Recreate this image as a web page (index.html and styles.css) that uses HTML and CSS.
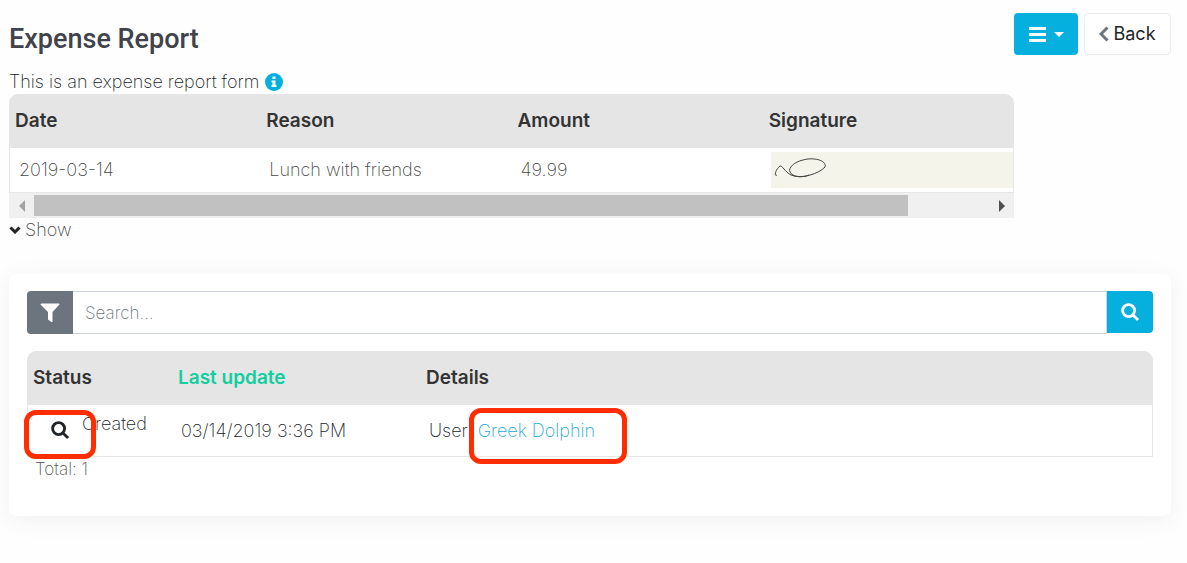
FILE: index.html
```html
<!DOCTYPE html>
<html lang="en">
<head>
    <meta charset="UTF-8">
    <meta name="viewport" content="width=device-width, initial-scale=1.0">
    <title>Expense Report</title>
    <link rel="stylesheet" href="styles.css">
</head>
<body>
    <main class="page">
        <div class="top">
            <section class="report">
                <h1>Expense Report</h1>
                <p class="description">
                    This is an expense report form
                    <svg class="info-icon" viewBox="0 0 18 18" aria-hidden="true">
                        <circle cx="9" cy="9" r="9" fill="#05b0de"/>
                        <path d="M7.5 3.5h3v2.6h-3zM6.5 7.4h4v4.8h1v1.8h-5v-1.8h1V9.2h-1z" fill="#fff"/>
                    </svg>
                </p>
                <table class="grid expenses">
                    <thead>
                        <tr><th>Date</th><th>Reason</th><th>Amount</th><th>Signature</th></tr>
                    </thead>
                    <tbody>
                        <tr>
                            <td>2019-03-14</td>
                            <td>Lunch with friends</td>
                            <td>49.99</td>
                            <td class="signature-cell">
                                <div class="signature">
                                    <svg viewBox="0 0 60 36" role="img" aria-label="Signature">
                                        <path d="M6 23C3 25 4 18 9 14C11 13 14 20 20 23C30 28 49 21 54 15C56 8 42 5 32 8C23 10 17 16 19 20C21 25 32 26 38 23"/>
                                    </svg>
                                </div>
                            </td>
                        </tr>
                    </tbody>
                </table>
                <div class="scrollbar">
                    <button class="scroll-arrow left" aria-label="Scroll left"></button>
                    <div class="scroll-track"><div class="scroll-thumb"></div></div>
                    <button class="scroll-arrow right" aria-label="Scroll right"></button>
                </div>
                <button class="show">
                    <svg viewBox="0 0 12 8" aria-hidden="true"><path d="M1.5 1.5L6 6L10.5 1.5"/></svg>
                    Show
                </button>
            </section>
            <div class="actions">
                <button class="menu-button" aria-label="Menu">
                    <svg class="bars" viewBox="0 0 17 15" aria-hidden="true"><path d="M0 1.5H17M0 7.5H17M0 13.5H17"/></svg>
                    <span class="caret"></span>
                </button>
                <button class="back-button">
                    <svg viewBox="0 0 10 16" aria-hidden="true"><path d="M8.5 1.5L2 8L8.5 14.5"/></svg>
                    Back
                </button>
            </div>
        </div>

        <section class="card">
            <form class="search">
                <button type="button" class="filter-button" aria-label="Filter">
                    <svg viewBox="0 0 20 20" aria-hidden="true"><path d="M1 .5h18q1 .7 0 1.500L12.500 9v9.500q-.6.900-1.500.3L8 16.500V9L.9 2Q0 1.200 1 .5z"/></svg>
                </button>
                <input type="text" placeholder="Search..." aria-label="Search">
                <button type="button" class="search-button" aria-label="Search">
                    <svg class="glass" viewBox="0 0 20 20" aria-hidden="true"><circle cx="8" cy="8" r="6.3"/><path d="M12.8 12.8L18 18"/></svg>
                </button>
            </form>

            <table class="grid updates">
                <thead>
                    <tr><th class="col-status">Status</th><th class="col-update">Last update</th><th>Details</th></tr>
                </thead>
                <tbody>
                    <tr>
                        <td>
                            <div class="status">
                                <button class="view-button" aria-label="View">
                                    <svg class="glass" viewBox="0 0 20 20" aria-hidden="true"><circle cx="8" cy="8" r="6.3"/><path d="M12.8 12.8L18 18"/></svg>
                                    <span class="marker"></span>
                                </button>
                                <span>Created</span>
                            </div>
                        </td>
                        <td>03/14/2019 3:36 PM</td>
                        <td>User: <a class="user" href="#">Greek Dolphin<span class="marker"></span></a></td>
                    </tr>
                </tbody>
            </table>
            <p class="total">Total: 1</p>
        </section>
    </main>
</body>
</html>
```
FILE: styles.css
```css
* {
    box-sizing: border-box;
}

body {
    margin: 0;
    background: #fefefe;
    color: #212529;
    font-family: Inter, "Open Sans", sans-serif;
    font-size: 18px;
    font-weight: 200;
    line-height: 24px;
}

button {
    border: none;
    padding: 0;
    background: none;
    color: inherit;
    font: inherit;
    cursor: pointer;
}

h1,
p {
    margin: 0;
}

svg {
    display: block;
    flex-shrink: 0;
}

.page {
    padding: 13px 16px 47px 9px;
}

.top {
    display: flex;
    align-items: flex-start;
}

.report {
    flex: 1;
    min-width: 0;
}

h1 {
    padding: 9px 0 13px;
    color: #40424c;
    font-family: Roboto, sans-serif;
    font-size: 27px;
    font-weight: 500;
    line-height: 34px;
}

.description {
    display: flex;
    align-items: center;
    gap: 6px;
    line-height: 25px;
}

.info-icon {
    width: 18px;
    height: 18px;
}

/* Tables */
.grid {
    width: 100%;
    table-layout: fixed;
    border-collapse: separate;
    border-spacing: 0;
    border-radius: 9px 9px 0 0;
    overflow: hidden;
}

.grid th {
    height: 54px;
    padding: 0 6px;
    background: #e5e5e5;
    color: #333;
    font-size: 19px;
    font-weight: 600;
    text-align: left;
}

.grid td {
    padding: 0 9px;
    border-bottom: 1px solid #e7e7e7;
    background: #fff;
    white-space: nowrap;
}

.grid td:first-child {
    border-left: 1px solid #e7e7e7;
}

.grid td:last-child {
    border-right: 1px solid #e7e7e7;
}

.expenses td {
    height: 45px;
    color: #484848;
}

.expenses .signature-cell {
    padding: 0 0 0 8px;
}

.signature {
    background: #f4f4ea;
}

.signature svg {
    width: 60px;
    height: 36px;
    fill: none;
    stroke: #444;
}

/* Horizontal scrollbar */
.scrollbar {
    display: flex;
    height: 25px;
    padding: 2px 0;
    background: #f0f0f0;
}

.scroll-arrow {
    display: flex;
    width: 25px;
    align-items: center;
    justify-content: center;
}

.scroll-arrow::before {
    content: "";
    border: 6px solid transparent;
}

.scroll-arrow.left::before {
    border-left: none;
    border-right-color: #a3a3a3;
}

.scroll-arrow.right::before {
    border-right: none;
    border-left-color: #505050;
}

.scroll-track {
    flex: 1;
}

.scroll-thumb {
    width: 91.5%;
    height: 100%;
    background: #c1c1c1;
}

.show {
    display: flex;
    align-items: center;
    gap: 4px;
    color: #484848;
}

.show svg {
    width: 12px;
    height: 8px;
    fill: none;
    stroke: #222;
    stroke-width: 3;
}

/* Buttons on the right */
.actions {
    display: flex;
    gap: 6px;
}

.menu-button,
.back-button {
    display: flex;
    height: 42px;
    align-items: center;
    justify-content: center;
    border-radius: 4px;
}

.menu-button {
    width: 64px;
    gap: 8px;
    background: #05b0de;
}

.bars {
    width: 17px;
    height: 15px;
    stroke: #fff;
    stroke-width: 3;
}

.caret {
    border: 5px solid transparent;
    border-top-color: #fff;
    border-bottom: none;
}

.back-button {
    width: 87px;
    gap: 4px;
    border: 1px solid #ebebf2;
    background: #fff;
    font-weight: 400;
}

.back-button svg {
    width: 10px;
    height: 16px;
    fill: none;
    stroke: #6c757d;
    stroke-width: 3;
}

/* Search card */
.card {
    margin-top: 32px;
    padding: 17px 18px 35px;
    border-radius: 8px;
    background: #fff;
    box-shadow: 0 4px 24px rgba(0, 0, 0, 0.06);
}

.search {
    display: flex;
    height: 43px;
    margin-bottom: 17px;
}

.filter-button,
.search-button {
    display: flex;
    width: 46px;
    align-items: center;
    justify-content: center;
}

.filter-button {
    border-radius: 4px 0 0 4px;
    background: #6c757d;
}

.filter-button svg {
    width: 20px;
    height: 20px;
    fill: #fff;
}

.search-button {
    height: 42px;
    border-radius: 0 4px 4px 0;
    background: #05b0de;
    color: #fff;
}

.search input {
    flex: 1;
    min-width: 0;
    padding: 0 12px;
    border: 1px solid #ced4da;
    border-left: none;
    background: #fff;
    font: inherit;
    font-size: 17px;
}

.search input::placeholder {
    color: #6c757d;
}

.glass {
    width: 19px;
    height: 19px;
    fill: none;
    stroke: currentColor;
    stroke-width: 3;
}

.updates {
    overflow: visible;
}

.updates th:first-child {
    border-top-left-radius: 9px;
}

.updates th:last-child {
    border-top-right-radius: 9px;
}

.updates .col-status {
    width: 145px;
}

.updates .col-update {
    width: 248px;
    color: #13ce9f;
}

.updates td {
    height: 52px;
}

.updates td:first-child {
    padding: 0 0 0 23px;
}

.status {
    display: flex;
    align-items: center;
    gap: 12px;
}

.status > span {
    padding-bottom: 14px;
}

.view-button,
.user {
    position: relative;
}

.user {
    color: #1ba8d8;
    text-decoration: none;
}

/* Red highlight drawn over the controls */
.marker {
    position: absolute;
    border: 5px solid #ff2d00;
    border-radius: 12px;
}

.view-button .marker {
    inset: -11px -26px -19px -27px;
}

.user .marker {
    inset: -12px -32px -23px -9px;
}

.total {
    padding-left: 8px;
    color: #555;
    font-size: 17px;
}
```
